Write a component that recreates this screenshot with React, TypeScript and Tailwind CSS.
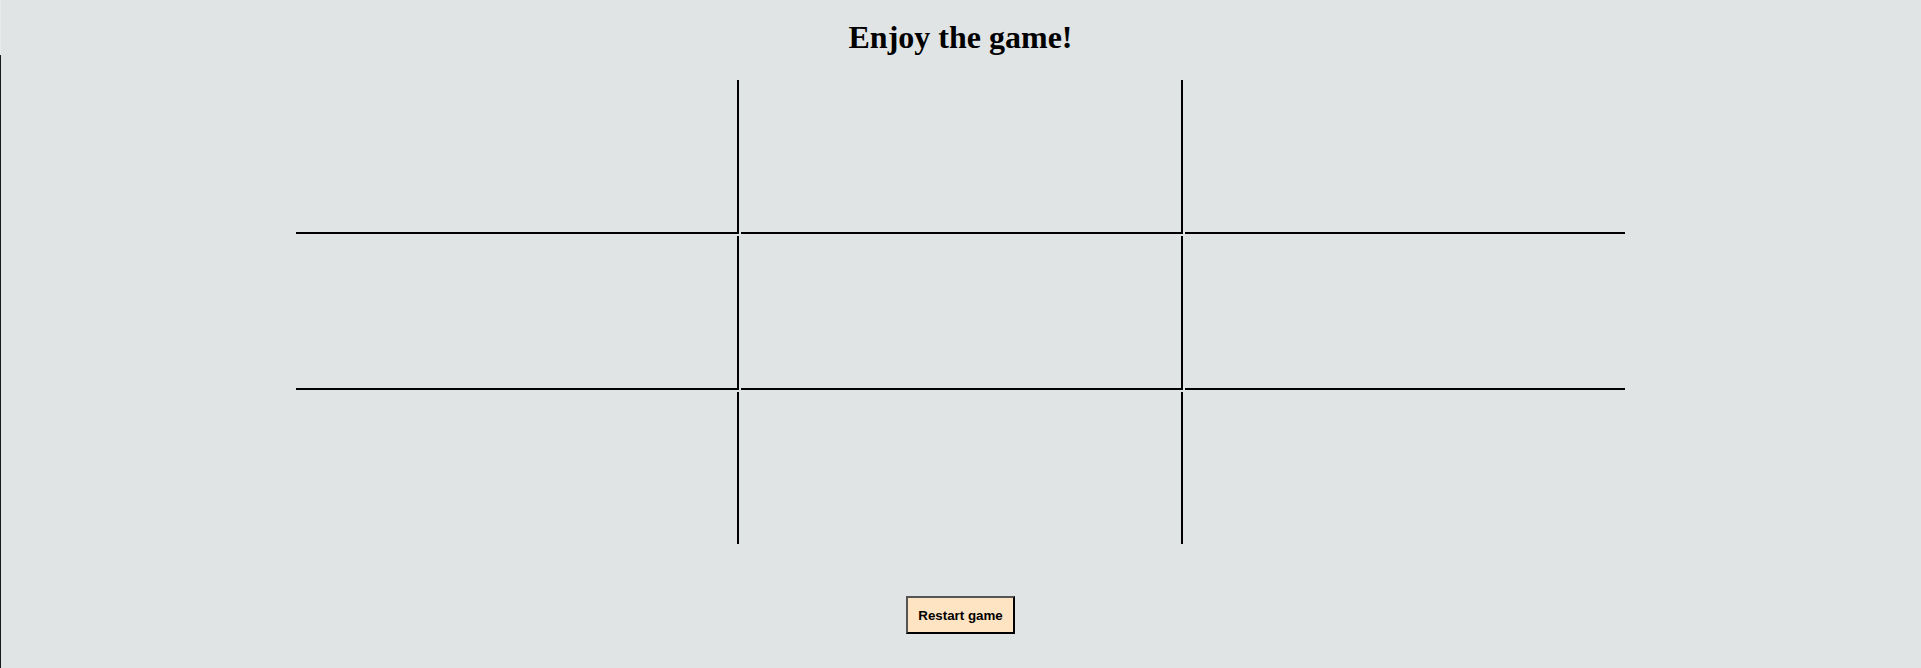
import { useState } from "react";

const cellClass = (i: number) => {
  const col = i % 3;
  const row = Math.floor(i / 3);
  const right = col < 2 ? "border-r-2" : "";
  const bottom = row < 2 ? "border-b-2" : "";
  const width = col === 0 ? "w-[443px]" : col === 1 ? "w-[442px]" : "w-[440px]";
  const height = row < 2 ? "h-[154px]" : "h-[152px]";
  return `${width} ${height} ${right} ${bottom} border-black box-border flex items-center justify-center text-6xl font-bold`;
};

export default function App() {
  const [board, setBoard] = useState<(string | null)[]>(Array(9).fill(null));
  const [xNext, setXNext] = useState(true);

  const play = (i: number) => {
    if (board[i]) return;
    const next = board.slice();
    next[i] = xNext ? "X" : "O";
    setBoard(next);
    setXNext(!xNext);
  };

  const restart = () => {
    setBoard(Array(9).fill(null));
    setXNext(true);
  };

  return (
    <div className="min-h-[668px] bg-[#e0e4e5] font-['Liberation_Serif',serif] text-black">
      <header className="h-[55px] pt-[19px] shadow-[inset_1px_0_0_#eaeaea]">
        <h1 className="text-center text-[32px] leading-[37px] font-bold">Enjoy the game!</h1>
      </header>

      <main className="h-[613px] shadow-[inset_1px_0_0_#1a1a1a] flex flex-col items-center pt-[25px]">
        <div className="grid grid-cols-[443px_442px_440px] gap-[2px]">
          {board.map((v, i) => (
            <div key={i} className={cellClass(i)} onClick={() => play(i)}>
              {v}
            </div>
          ))}
        </div>

        <button
          onClick={restart}
          className="mt-[52px] h-[38px] px-[10px] bg-[#ffe4c4] border-2 border-t-[#555] border-l-[#555] border-b-black border-r-black font-['Liberation_Sans',Arial,sans-serif] text-[13.33px] font-bold leading-[15px]"
        >
          Restart game
        </button>
      </main>
    </div>
  );
}
